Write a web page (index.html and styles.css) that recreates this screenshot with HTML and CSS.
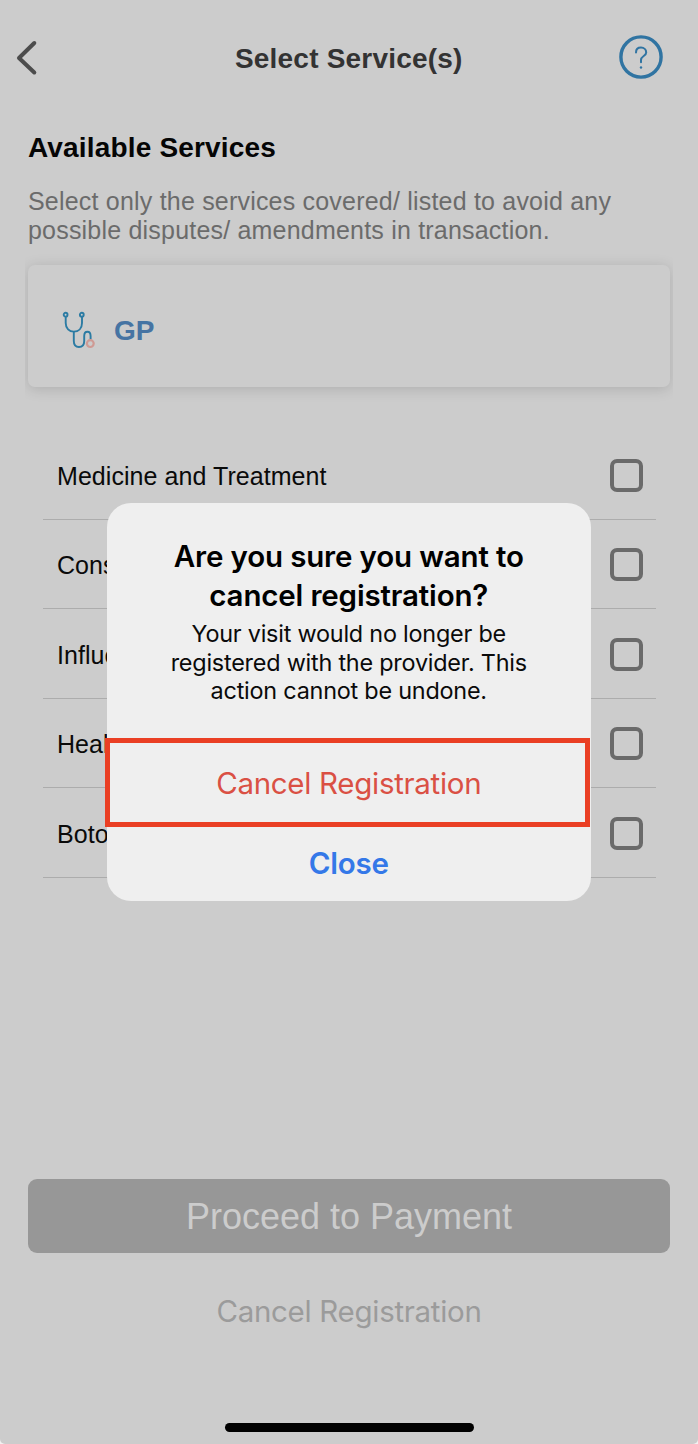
FILE: index.html
```html
<!DOCTYPE html>
<html lang="en">
<head>
    <meta charset="UTF-8">
    <meta name="viewport" content="width=device-width, initial-scale=1.0">
    <title>Select Service(s)</title>
    <link rel="stylesheet" href="styles.css">
</head>
<body>

    <div class="screen">
        <header class="header">
            <svg class="back" viewBox="0 0 24 36" width="24" height="36">
                <path d="M19.3 3 L4 18 L19.3 32.5" />
            </svg>
            <h1>Select Service(s)</h1>
            <svg class="help" viewBox="0 0 44 44" width="44" height="44">
                <circle cx="22" cy="22" r="20.1" />
                <path d="M17 17.5 C17 14.2 19 12.6 22 12.6 C25 12.6 27.2 14.6 27.2 17.4 C27.2 21.2 22 20.8 22 25 V27.3" />
                <circle class="dot" cx="22" cy="32.5" r="1.2" />
            </svg>
        </header>

        <main class="content">
            <h2>Available Services</h2>
            <p class="hint">Select only the services covered/ listed to avoid any<br>possible disputes/ amendments in transaction.</p>

            <div class="card">
                <svg class="stethoscope" viewBox="0 0 34 38" width="34" height="38">
                    <circle cx="3.6" cy="3.7" r="1.9" />
                    <circle cx="19.8" cy="3.7" r="1.9" />
                    <path d="M3.7 6 V12 C3.7 17.5 7.3 20.6 11.8 20.6 C16.5 20.6 20 17.5 20 12 V6" />
                    <path d="M11.8 20.6 V30 C11.8 34 13.8 36 17 36 C20.2 36 22.2 34 22.2 30 V25 C22.2 22.2 23.4 20.7 25.4 20.7 C27.5 20.7 28.6 22.2 28.6 25 V28.5" />
                    <circle class="chest" cx="28.3" cy="32.6" r="3.4" />
                </svg>
                <span>GP</span>
            </div>

            <!-- Service list -->
            <ul class="services">
                <li><span>Medicine and Treatment</span><i class="checkbox"></i></li>
                <li><span>Consult</span><i class="checkbox"></i></li>
                <li><span>Influenza</span><i class="checkbox"></i></li>
                <li><span>Health</span><i class="checkbox"></i></li>
                <li><span>Botox</span><i class="checkbox"></i></li>
            </ul>
        </main>

        <footer class="footer">
            <button class="proceed">Proceed to Payment</button>
            <button class="cancel">Cancel Registration</button>
            <div class="home-bar"></div>
        </footer>
    </div>

    <!-- Confirmation dialog -->
    <div class="dialog">
        <h3>Are you sure you want to<br>cancel registration?</h3>
        <p>Your visit would no longer be<br>registered with the provider. This<br>action cannot be undone.</p>
        <button class="dialog-cancel">Cancel Registration</button>
        <button class="dialog-close">Close</button>
    </div>

</body>
</html>
```
FILE: styles.css
```css
* {
    box-sizing: border-box;
}

html {
    background: #f2f2f2;
}

body {
    margin: 0;
    position: relative;
    height: 1444px;
    font-family: "Liberation Sans", Arial, sans-serif;
    overflow: hidden;
}

button {
    border: none;
    background: none;
    padding: 0;
    font-family: inherit;
    white-space: nowrap;
}

.screen {
    height: 1444px;
    display: flex;
    flex-direction: column;
    background: #cccccc;
    border-radius: 0 0 5px 5px;
}

.header {
    height: 115px;
    padding: 0 35px 0 14.5px;
    display: flex;
    align-items: center;
    justify-content: space-between;
}

.header h1 {
    margin: 3px 0 0 40px;
    font-size: 28px;
    letter-spacing: 0.2px;
    color: #333333;
}

.back {
    fill: none;
    stroke: #4c4c4c;
    stroke-width: 4;
    stroke-linecap: round;
    stroke-linejoin: round;
}

.help {
    margin-top: -1px;
    fill: none;
    stroke: #3074a2;
    stroke-width: 3.4;
}

.help path {
    stroke-width: 2;
    stroke-linecap: round;
}

.help .dot {
    fill: #3074a2;
    stroke: none;
}

.content {
    flex: 1;
    padding: 16px 28px 0;
}

.content h2 {
    margin: 0;
    font-size: 28px;
    line-height: 34px;
    letter-spacing: 0.17px;
    color: #050505;
}

.hint {
    margin: 22px 0 20px;
    font-size: 25px;
    line-height: 29px;
    letter-spacing: 0.2px;
    white-space: nowrap;
    color: #6b6b6b;
}

.card {
    height: 122px;
    padding: 8px 0 0 34px;
    display: flex;
    align-items: center;
    gap: 18px;
    border-radius: 7px;
    box-shadow: 0 2px 14px rgba(0, 0, 0, 0.15);
    clip-path: inset(-20px -3px);
    font-size: 28px;
    font-weight: bold;
    color: #4674a3;
}

.card span {
    padding-top: 2px;
}

.stethoscope {
    fill: none;
    stroke: #2b7ba3;
    stroke-width: 1.9;
}

.stethoscope .chest {
    stroke: #cf9a94;
    stroke-width: 2.2;
}

.services {
    list-style: none;
    margin: 43px 14.5px 0;
    padding: 0;
}

.services li {
    height: 89.5px;
    padding: 2px 12.5px 0 14.5px;
    display: flex;
    align-items: center;
    justify-content: space-between;
    border-bottom: 1px solid #acacac;
    font-size: 25px;
    letter-spacing: 0.06px;
    color: #0a0a0a;
}

.services span {
    padding-top: 2px;
}

.checkbox {
    width: 33px;
    height: 33px;
    border: 4px solid #6a6a6a;
    border-radius: 7px;
}

.footer {
    height: 265px;
    padding: 0 28px;
    display: flex;
    flex-direction: column;
    align-items: center;
}

.proceed {
    width: 642px;
    height: 74px;
    padding-top: 2px;
    border-radius: 9px;
    background: #979797;
    color: #cccccc;
    font-size: 36px;
}

.cancel {
    margin-top: 38px;
    height: 40px;
    font-family: Inter, sans-serif;
    font-size: 29.5px;
    letter-spacing: -0.3px;
    color: #9b9b9b;
}

.home-bar {
    width: 249px;
    height: 9px;
    margin-top: 92px;
    border-radius: 5px;
    background: #000;
}

.dialog {
    position: absolute;
    top: 502.5px;
    left: 107px;
    width: 483.5px;
    height: 398.5px;
    padding-top: 34.5px;
    display: flex;
    flex-direction: column;
    align-items: center;
    border-radius: 24px;
    background: #efefef;
    font-family: Inter, sans-serif;
    text-align: center;
    white-space: nowrap;
}

.dialog h3 {
    margin: 0;
    font-size: 29.5px;
    font-weight: 600;
    line-height: 39px;
    letter-spacing: -0.16px;
    color: #000;
}

.dialog p {
    margin: 5px 0 32px;
    font-size: 23.4px;
    line-height: 28.5px;
    letter-spacing: -0.22px;
    color: #0a0a0a;
}

/* highlighted action */
.dialog-cancel {
    width: 485px;
    height: 89px;
    flex-shrink: 0;
    margin-left: -3px;
    padding: 2px 0 0 3px;
    border: 5px solid #ea3f24;
    font-size: 29.5px;
    letter-spacing: -0.3px;
    color: #da5044;
}

.dialog-close {
    height: 72px;
    font-size: 29.5px;
    font-weight: 600;
    letter-spacing: -0.2px;
    color: #3478e8;
}
```
